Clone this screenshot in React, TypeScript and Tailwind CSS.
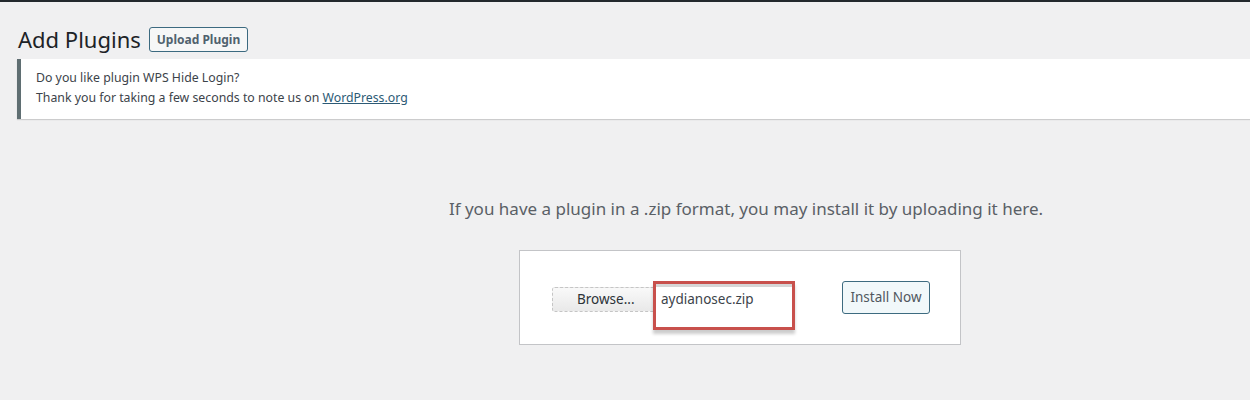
import React from 'react';

const font = { fontFamily: '"Noto Sans", "Open Sans", sans-serif' };

const App: React.FC = () => {
    return (
        <div className="w-[1250px] h-[400px] bg-[#f0f0f1] border-t-2 border-[#23282d] overflow-hidden" style={font}>
            {/* --- Heading --- */}
            <div className="flex items-center gap-[8px] pl-[18px] pt-[20px] h-[55px]">
                <h1 className="text-[22px] leading-[29px] font-normal text-[#1d2327]">Add Plugins</h1>
                <button className="h-[25px] px-[7px] border border-[#3c6a80] rounded-[3px] bg-[#f6f7f7] text-[12px] font-bold text-[#50626e]">
                    Upload Plugin
                </button>
            </div>

            {/* --- Notice --- */}
            <div className="ml-[17px] mt-[2px] h-[60px] bg-white border-l-4 border-[#5f6e72] shadow-[0_1px_1px_rgba(0,0,0,0.15)] pl-[15px] pt-[9px] text-[12.3px] leading-[20px] text-[#3c434a]">
                <p>Do you like plugin WPS Hide Login?</p>
                <p>
                    Thank you for taking a few seconds to note us on{' '}
                    <a href="#" className="underline text-[#2c5a75]">WordPress.org</a>
                </p>
            </div>

            {/* --- Upload area --- */}
            <div className="flex flex-col items-center pl-[242px]">
                <p className="mt-[78px] text-[17px] leading-[24px] text-[#5a6066]">
                    If you have a plugin in a .zip format, you may install it by uploading it here.
                </p>
                <div className="mt-[29px] mr-[12px] w-[442px] h-[95px] bg-white border border-[#c3c4c7] flex items-start pl-[32px] pt-[30px]">
                    <div className="flex items-start">
                        <button className="mt-[6px] w-[104px] h-[25px] border border-dashed border-[#c5c5c5] rounded-[3px] bg-gradient-to-b from-[#f9f9f9] to-[#e9e9e9] text-[13.5px] text-[#2c3338] text-left pl-[24px]">
                            Browse...
                        </button>
                        <div className="-ml-[3px] w-[142px] h-[49px] border-[3px] border-[#c8504c] bg-white shadow-[0_4px_3px_rgba(0,0,0,0.2)]">
                            <div className="h-full border-t-[3px] border-[#d6d6d6] pl-[5px] pt-[3px] text-[13.5px] leading-[18px] text-[#3c434a]">
                                aydianosec.zip
                            </div>
                        </div>
                    </div>
                    <button className="ml-[47px] w-[88px] h-[33px] border border-[#3d6b80] rounded-[3px] bg-[#f1f8fa] text-[13.5px] text-[#50575e]">
                        Install Now
                    </button>
                </div>
            </div>
        </div>
    );
};

export default App;
